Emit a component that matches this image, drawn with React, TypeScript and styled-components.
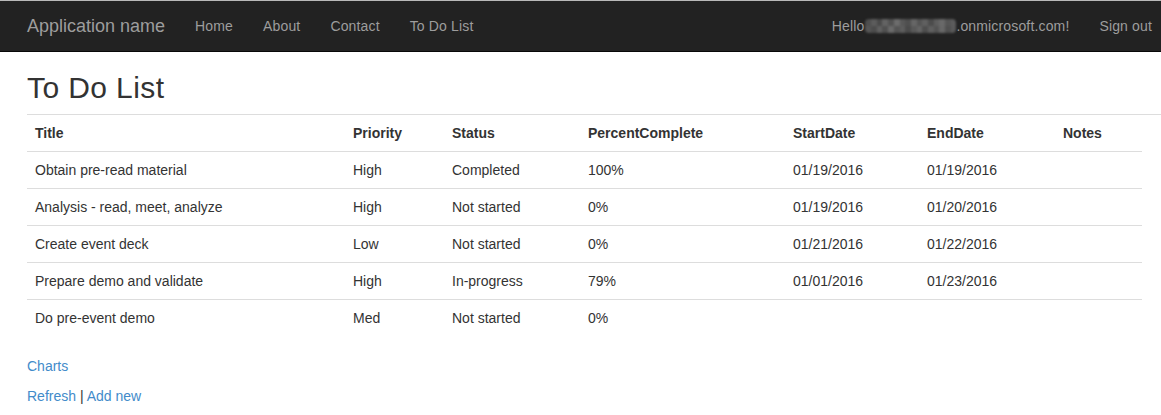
import React from "react";
import styled, { createGlobalStyle } from "styled-components";

const Global = createGlobalStyle`
  html, body { margin: 0; padding: 0; background: #fff; }
  body {
    font-family: "Liberation Sans", Arial, Helvetica, sans-serif;
    font-size: 14px;
    line-height: 20px;
    color: #333;
  }
  * { box-sizing: border-box; }
`;

const Navbar = styled.nav`
  height: 52px;
  background: #222;
  border-top: 1px solid #b9b9b9;
  border-bottom: 1px solid #080808;
  display: flex;
  align-items: center;
  justify-content: space-between;
  padding: 0 9px 0 27px;
`;

const NavGroup = styled.div`
  display: flex;
  align-items: center;
  gap: 30px;
`;

const Brand = styled.a`
  font-size: 18px;
  line-height: 20px;
  color: #9d9d9d;
  text-decoration: none;
`;

const NavLink = styled.a`
  font-size: 14px;
  line-height: 20px;
  color: #9d9d9d;
  text-decoration: none;
  letter-spacing: 0.15px;
  display: inline-flex;
  align-items: center;
`;

const Mosaic = styled.span`
  display: inline-grid;
  grid-template-columns: repeat(16, 1fr);
  grid-template-rows: repeat(2, 7px);
  width: 91px;
  height: 14px;
  margin: 0 0 0 1px;
  overflow: hidden;
  border-radius: 4px;
  filter: blur(1px);
`;

const Tile = styled.span<{ $c: string }>`
  background: ${(p) => p.$c};
`;

const Main = styled.main`
  padding: 0 19px 0 27px;
`;

const Heading = styled.h2`
  font-size: 30px;
  font-weight: 400;
  line-height: 33px;
  letter-spacing: 0.4px;
  margin: 19px 0 10px;
  color: #333;
`;

const Rule = styled.div`
  border-top: 1px solid #ddd;
  margin-right: -19px;
`;

const Table = styled.table`
  width: 1115px;
  border-collapse: collapse;
  table-layout: fixed;
  margin-bottom: 20px;
`;

const Th = styled.th`
  text-align: left;
  font-weight: 700;
  padding: 8px;
  line-height: 20px;
  white-space: nowrap;
`;

const Td = styled.td`
  padding: 8px;
  line-height: 20px;
  border-top: 1px solid #ddd;
  white-space: nowrap;
`;

const Para = styled.p`
  margin: 0 0 10px;
`;

const Link = styled.a`
  color: #428bca;
  text-decoration: none;
`;

const cols = [318, 99, 136, 205, 134, 136, 87];
const headers = ["Title", "Priority", "Status", "PercentComplete", "StartDate", "EndDate", "Notes"];
const rows = [
  ["Obtain pre-read material", "High", "Completed", "100%", "01/19/2016", "01/19/2016", ""],
  ["Analysis - read, meet, analyze", "High", "Not started", "0%", "01/19/2016", "01/20/2016", ""],
  ["Create event deck", "Low", "Not started", "0%", "01/21/2016", "01/22/2016", ""],
  ["Prepare demo and validate", "High", "In-progress", "79%", "01/01/2016", "01/23/2016", ""],
  ["Do pre-event demo", "Med", "Not started", "0%", "", "", ""],
];

const shades = [
  "#4e4e4e", "#5c5c5c", "#4a4a4a", "#636363", "#525252", "#6c6c6c", "#585858", "#4f4f4f",
  "#666666", "#545454", "#606060", "#4c4c4c", "#5e5e5e", "#696969", "#555555", "#5c5c5c",
  "#555555", "#4c4c4c", "#606060", "#505050", "#6a6a6a", "#545454", "#5d5d5d", "#4a4a4a",
  "#595959", "#646464", "#4e4e4e", "#5f5f5f", "#535353", "#676767", "#505050", "#5a5a5a",
];

export default function App() {
  return (
    <>
      <Global />
      <Navbar>
        <NavGroup>
          <Brand href="#">Application name</Brand>
          <NavLink href="#">Home</NavLink>
          <NavLink href="#">About</NavLink>
          <NavLink href="#">Contact</NavLink>
          <NavLink href="#">To Do List</NavLink>
        </NavGroup>
        <NavGroup>
          <NavLink href="#">
            Hello
            <Mosaic aria-hidden="true">
              {shades.map((c, i) => (
                <Tile key={i} $c={c} />
              ))}
            </Mosaic>
            .onmicrosoft.com!
          </NavLink>
          <NavLink href="#">Sign out</NavLink>
        </NavGroup>
      </Navbar>
      <Main>
        <Heading>To Do List</Heading>
        <Rule />
        <Table>
          <colgroup>
            {cols.map((w, i) => (
              <col key={i} style={{ width: w }} />
            ))}
          </colgroup>
          <thead>
            <tr>
              {headers.map((h) => (
                <Th key={h}>{h}</Th>
              ))}
            </tr>
          </thead>
          <tbody>
            {rows.map((r, i) => (
              <tr key={i}>
                {r.map((c, j) => (
                  <Td key={j}>{c}</Td>
                ))}
              </tr>
            ))}
          </tbody>
        </Table>
        <Para>
          <Link href="#">Charts</Link>
        </Para>
        <Para>
          <Link href="#">Refresh</Link> | <Link href="#">Add new</Link>
        </Para>
      </Main>
    </>
  );
}
